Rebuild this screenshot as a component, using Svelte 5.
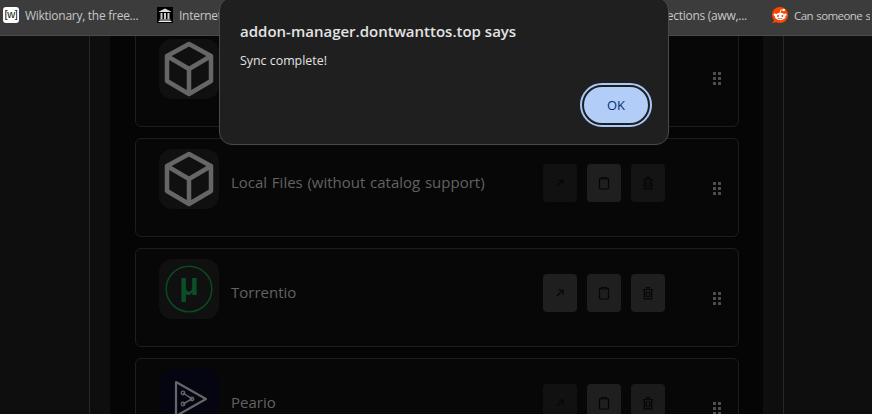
<script>
  const cards = [
    { name: '', icon: 'box', tones: ['lit', 'lit', 'lit'] },
    { name: 'Local Files (without catalog support)', icon: 'box', tones: ['dim', 'lit', 'mid'] },
    { name: 'Torrentio', icon: 'torrent', tones: ['lit', 'lit', 'lit'] },
    { name: 'Peario', icon: 'peario', tones: ['dim', 'lit', 'soft'] }
  ];
</script>

<div class="page">
  <nav class="bar">
    <div class="mark m1">
      <span class="wik">[w]</span>
      <span class="label tight">Wiktionary, the free...</span>
    </div>
    <div class="mark m2">
      <svg class="fav" viewBox="0 0 16 16">
        <rect width="16" height="16" fill="#000" />
        <path d="M8 1.500 14 4.400V5H2v-.6z" fill="#ddd" />
        <path d="M3.500 6h2v6h-2zM7 6h2v6H7zM10.500 6h2v6h-2z" fill="#ccc" />
        <path d="M2.500 12.500h11V13.500h-11zM1.500 14h13v1h-13z" fill="#eee" />
      </svg>
      <span class="label tight">Internet Archive</span>
    </div>
    <div class="mark m3">
      <span class="label tight">Collections (aww,...</span>
    </div>
    <div class="mark m4">
      <svg class="fav" viewBox="0 0 16 16">
        <circle cx="8" cy="8" r="8" fill="#ff4500" />
        <path d="M0 16 3 12 5 15z" fill="#ff4500" />
        <ellipse cx="8.200" cy="9.500" rx="5.300" ry="3.700" fill="#fff" />
        <circle cx="2.900" cy="7.800" r="1.300" fill="#fff" />
        <circle cx="13.300" cy="7.800" r="1.300" fill="#fff" />
        <circle cx="11.800" cy="3" r="1.200" fill="#fff" />
        <path d="M8.200 6 8.800 3 11 3" stroke="#fff" stroke-width=".8" fill="none" />
        <circle cx="6" cy="9" r="1" fill="#ff4500" />
        <circle cx="10.400" cy="9" r="1" fill="#ff4500" />
        <path d="M6 11.200q2.200 1.300 4.400 0" stroke="#555" stroke-width=".7" fill="none" />
      </svg>
      <span class="label narrow">Can someone s</span>
    </div>
  </nav>

  <main class="backdrop">
    <div class="frame">
      <div class="column">
        <div class="list">
          {#each cards as card}
            <article class="card">
              <div class="tile {card.icon}">
                {#if card.icon === 'box'}
                  <svg viewBox="0 0 60 60" class="art">
                    <path d="M30 5 52 17V42L30 55 8 42V17Z M8 17 30 30 52 17 M30 30V55" fill="none" stroke="#666" stroke-width="4.500" stroke-linejoin="round" />
                  </svg>
                {:else if card.icon === 'torrent'}
                  <svg viewBox="0 0 60 60" class="art">
                    <circle cx="30" cy="30" r="22.800" fill="none" stroke="#0a4a22" stroke-width="1.500" />
                  </svg>
                  <span class="mu">μ</span>
                {:else}
                  <svg viewBox="0 0 60 60" class="art">
                    <path d="M17 13 47 30 17 47Z" fill="none" stroke="#666" stroke-width="2.200" stroke-linejoin="round" />
                    <path d="M24 24 33 30 24 35" fill="none" stroke="#666" stroke-width="1.500" />
                    <circle cx="24" cy="24" r="1.800" fill="none" stroke="#666" stroke-width="1.300" />
                    <circle cx="24" cy="35" r="1.800" fill="none" stroke="#666" stroke-width="1.300" />
                    <circle cx="33" cy="30" r="1.800" fill="none" stroke="#666" stroke-width="1.300" />
                  </svg>
                {/if}
              </div>
              <div class="name">{card.name}</div>
              <div class="actions">
                <button class="act {card.tones[0]}">
                  <svg viewBox="0 0 14 14"><path d="M4 10 10 4M5 4H10V9" /></svg>
                </button>
                <button class="act {card.tones[1]}">
                  <svg viewBox="0 0 14 14"><path d="M4.500 2.500H3.500Q2.500 2.500 2.500 3.500V12Q2.500 13 3.500 13H10.500Q11.500 13 11.500 12V3.500Q11.500 2.500 10.500 2.500H9.500M4.500 1.500H9.500V3H4.500Z" /></svg>
                </button>
                <button class="act {card.tones[2]}">
                  <svg viewBox="0 0 14 14"><path d="M2 3.500H12M5.500 3.500V1.500H8.500V3.500M3.300 3.500V12.800H10.700V3.500M5.300 6H8.700V10.300H5.300Z" /></svg>
                </button>
              </div>
              <div class="grip" aria-hidden="true">
                {#each Array(6) as _}<i></i>{/each}
              </div>
            </article>
          {/each}
        </div>
      </div>
    </div>
  </main>

  <section class="dialog">
    <h2>addon-manager.dontwanttos.top says</h2>
    <p>Sync complete!</p>
    <div class="foot"><button class="ok">OK</button></div>
  </section>
</div>

<style>
  :global(body) {
    margin: 0;
    background: #0e0e0e;
    overflow: hidden;
  }
  .page {
    width: 872px;
    height: 414px;
    position: relative;
    overflow: hidden;
    display: flex;
    flex-direction: column;
    font-family: "Open Sans", "Noto Sans", sans-serif;
  }
  .bar {
    height: 30px;
    flex: none;
    display: flex;
    align-items: center;
    background: #3c3c3c;
    border-bottom: 1px solid #4a4a4a;
    overflow: hidden;
    white-space: nowrap;
    padding: 0 0 5px 3px;
  }
  .mark {
    display: flex;
    align-items: center;
    gap: 6px;
    flex: none;
    overflow: hidden;
  }
  .m1 { width: 154px; }
  .m2 { width: 200px; }
  .m3 { width: 390px; justify-content: flex-end; }
  .m4 { margin-left: 25px; }
  .label {
    color: #c7c7c7;
    font-size: 12px;
  }
  .tight {
    letter-spacing: -0.27px;
  }
  .narrow {
    font-size: 11.500px;
    letter-spacing: -0.6px;
    word-spacing: 1px;
  }
  .fav {
    width: 16px;
    height: 16px;
    flex: none;
  }
  .wik {
    width: 16px;
    height: 16px;
    flex: none;
    background: #fff;
    border-radius: 3px;
    color: #111;
    font: 11px/15px "Liberation Sans", sans-serif;
    letter-spacing: -0.4px;
    text-align: center;
  }
  .backdrop {
    flex: 1;
    min-height: 0;
    overflow: hidden;
    background: #0e0e0e;
    display: flex;
  }
  .frame {
    width: 695px;
    margin-left: 89px;
    box-sizing: border-box;
    border-left: 1px solid #262626;
    border-right: 1px solid #262626;
    padding: 0 20px;
    display: flex;
  }
  .column {
    flex: 1;
    min-width: 0;
    background: #050505;
    padding: 0 24px 0 25px;
  }
  .list {
    margin-top: -8px;
    display: flex;
    flex-direction: column;
    gap: 11px;
  }
  .card {
    height: 99px;
    flex: none;
    box-sizing: border-box;
    border: 1px solid #1d1d1d;
    border-radius: 6px;
    padding: 10px 17px 0 23px;
    display: flex;
    align-items: flex-start;
    background: #070707;
  }
  .tile {
    width: 60px;
    height: 60px;
    flex: none;
    border-radius: 13px;
    background: #101010;
    position: relative;
  }
  .tile.peario { background: #050512; }
  .art {
    width: 60px;
    height: 60px;
    display: block;
  }
  .mu {
    position: absolute;
    inset: 0 0 10px;
    display: flex;
    align-items: center;
    justify-content: center;
    font: bold 32px "Liberation Sans", sans-serif;
    color: #0a4f27;
  }
  .name {
    margin: 19px 0 0 12px;
    flex: 1;
    color: #626262;
    font-size: 15px;
    word-spacing: 0.8px;
    line-height: 28px;
    white-space: nowrap;
  }
  .actions {
    display: flex;
    gap: 10px;
    margin-top: 15px;
  }
  .act {
    width: 34px;
    height: 38px;
    padding: 0;
    border: 0;
    border-radius: 4px;
    display: flex;
    align-items: center;
    justify-content: center;
  }
  .act svg {
    width: 14px;
    height: 14px;
    fill: none;
    stroke: #060606;
    stroke-width: 1.200;
  }
  .dim { background: #111; }
  .mid { background: #141414; }
  .soft { background: #1b1b1b; }
  .lit { background: #1f1f1f; }
  .grip {
    margin: 33px 0 0 48px;
    display: grid;
    grid-template-columns: repeat(2, 3px);
    grid-auto-rows: 3px;
    gap: 2px;
  }
  .grip i {
    background: #4d4d4d;
  }
  .dialog {
    position: absolute;
    left: 219px;
    top: -3px;
    width: 450px;
    height: 148px;
    box-sizing: border-box;
    background: #1f1f1f;
    border: 1px solid #4a4a4a;
    border-radius: 13px;
    padding: 0 20px;
    display: flex;
    flex-direction: column;
  }
  h2 {
    margin: 23px 0 0;
    font-size: 15px;
    font-weight: 600;
    line-height: 20px;
    color: #e3e3e3;
    white-space: nowrap;
  }
  p {
    margin: 10px 0 0;
    font-size: 12.400px;
    line-height: 20px;
    color: #e3e3e3;
  }
  .foot {
    margin-top: auto;
    display: flex;
    justify-content: flex-end;
    padding-bottom: 19px;
    margin-right: -2px;
  }
  .ok {
    width: 68px;
    height: 40px;
    box-sizing: border-box;
    border: 2px solid #1f1f1f;
    outline: 2px solid #a8c7fa;
    border-radius: 20px;
    background: #b3cdf9;
    color: #062e6f;
    font: 13px "Open Sans", sans-serif;
    padding: 0;
  }
</style>
